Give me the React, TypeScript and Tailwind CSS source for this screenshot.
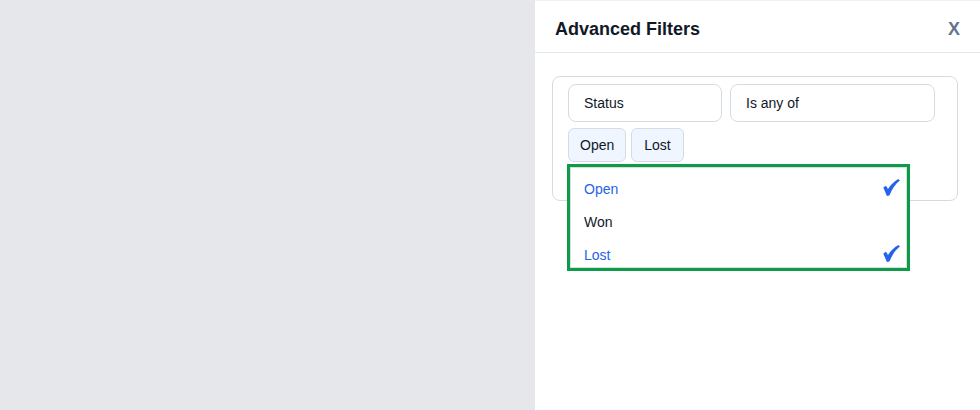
import React from "react";

const font = { fontFamily: '"Liberation Sans", Arial, sans-serif' };

function Check() {
  return (
    <svg width="17" height="17" viewBox="0 0 17 17" className="text-[#2563eb] -mt-[4px]">
      <path d="M0.3 8.6 L3 6.8 L5 10 C7.5 6 11 2.5 15.3 0 L16.9 1.6 C12.5 5 9.2 10 6.4 16.6 L3.9 16.9 Z" fill="currentColor" />
    </svg>
  );
}

export default function App() {
  const items = [
    { label: "Open", selected: true },
    { label: "Won", selected: false },
    { label: "Lost", selected: true },
  ];
  return (
    <div className="flex w-[980px] h-[410px] overflow-hidden" style={font}>
      <div className="flex-1 bg-[#e5e7eb]" />
      <div className="w-[445px] bg-white border-t border-[#eef0f3] flex flex-col">
        <div className="h-[52px] px-5 pt-[5px] flex items-center justify-between border-b border-[#e2e8f0]">
          <span className="text-[18px] font-bold text-[#111827]">Advanced Filters</span>
          <span className="text-[18px] font-bold text-[#64748b]">X</span>
        </div>
        <div className="pt-[23px] pl-[17px]">
          <div className="relative w-[406px] h-[125px] rounded-lg border border-[#d5dbe5] pl-[15px] pt-[7px]">
            <div className="flex gap-2">
              <div className="w-[154px] h-[38px] rounded-lg border border-[#d5dbe5] flex items-center px-[15px] text-[14px] text-[#111827]">
                Status
              </div>
              <div className="w-[205px] h-[38px] rounded-lg border border-[#d5dbe5] flex items-center px-[15px] text-[14px] text-[#111827]">
                Is any of
              </div>
            </div>
            <div className="flex gap-[5px] mt-[6px]">
              <div className="h-[34px] px-[11px] rounded-md border border-[#d5dbe5] bg-[#eff6ff] flex items-center text-[14px] text-[#111827]">
                Open
              </div>
              <div className="h-[34px] px-3 rounded-md border border-[#d5dbe5] bg-[#eff6ff] flex items-center text-[14px] text-[#111827]">
                Lost
              </div>
            </div>
            <div className="absolute left-[14px] top-[87px] w-[343px] h-[107px] border-[3px] border-[#0f9a4a] bg-white">
              <div className="h-full border border-[#cfe3d6] pt-[5px] overflow-hidden">
                {items.map((it) => (
                  <div key={it.label} className="h-[33px] flex items-center justify-between pl-[13px] pr-[6px]">
                    <span className={`text-[14px] ${it.selected ? "text-[#2563eb]" : "text-[#111827]"}`}>{it.label}</span>
                    {it.selected ? <Check /> : null}
                  </div>
                ))}
              </div>
            </div>
          </div>
        </div>
      </div>
    </div>
  );
}
